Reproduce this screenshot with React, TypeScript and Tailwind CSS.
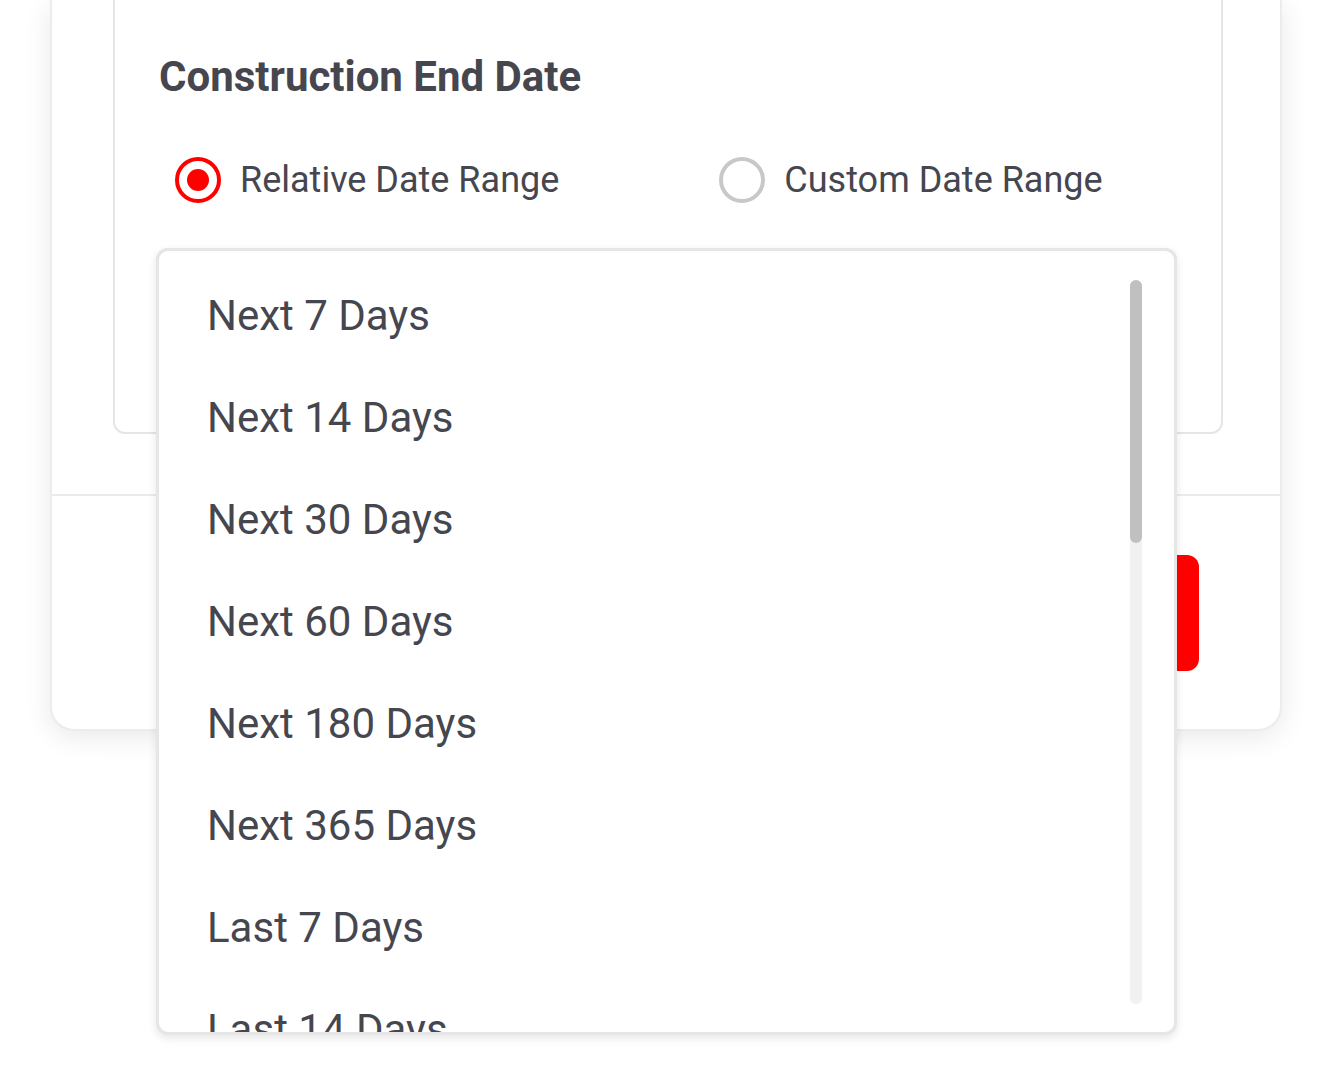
import React from "react";

const options = [
  "Next 7 Days",
  "Next 14 Days",
  "Next 30 Days",
  "Next 60 Days",
  "Next 180 Days",
  "Next 365 Days",
  "Last 7 Days",
  "Last 14 Days",
  "Last 30 Days",
];

function Radio({ checked, label }: { checked?: boolean; label: string }) {
  return (
    <label className="flex items-center gap-[19px]">
      <span
        className={
          checked
            ? "flex size-[46px] items-center justify-center rounded-full border-[4px] border-[#ff0000]"
            : "flex size-[46px] items-center justify-center rounded-full border-[4px] border-[#c8c8c8]"
        }
      >
        {checked && <span className="size-[22px] rounded-full bg-[#ff0000]" />}
      </span>
      <span className="text-[36px] leading-none text-[#46464f]">{label}</span>
    </label>
  );
}

export default function App() {
  return (
    <div className="min-h-screen bg-white font-['Roboto','Liberation_Sans',sans-serif]">
      <div className="ml-[50px] w-[1232px] rounded-b-[24px] border-x-2 border-b-2 border-[#ececec] bg-white shadow-[0_6px_28px_rgba(0,0,0,0.09)]">
        <div className="pb-[60px] pl-[61px] pr-[57px]">
          <div className="rounded-b-[12px] border-x-2 border-b-2 border-[#e5e5e5] pb-[60px] pl-[41px] pr-[44px] pt-[56px]">
            <h2 className="pl-[3px] text-[42px] font-bold leading-[42px] text-[#46464f]">Construction End Date</h2>
            <div className="mt-[59px] flex items-center gap-[160px] pl-[19px]">
              <Radio checked label="Relative Date Range" />
              <Radio label="Custom Date Range" />
            </div>
            <div className="relative mt-[45px] h-[124px]">
              <div className="h-full rounded-[12px] border-[3px] border-[#e6e6e6]" />
              <div className="absolute left-0 top-0 z-10 h-[787px] w-[1021px] overflow-hidden rounded-[12px] border-[3px] border-[#e6e6e6] bg-white shadow-[0_3px_8px_rgba(0,0,0,0.1)]">
                <ul className="pt-[14px]">
                  {options.map((o) => (
                    <li key={o} className="flex h-[102px] items-center pl-[48px] text-[42px] leading-none text-[#46464f]">
                      {o}
                    </li>
                  ))}
                </ul>
                <div className="absolute right-[32px] top-[29px] bottom-[28px] w-[12px] rounded-full bg-[#f1f1f1]">
                  <div className="h-[263px] w-full rounded-full bg-[#c0c0c0]" />
                </div>
              </div>
            </div>
          </div>
        </div>
        <div className="flex justify-end border-t-2 border-[#ebebeb] pb-[58px] pr-[81px] pt-[59px]">
          <button className="h-[116px] w-[260px] rounded-[12px] bg-[#ff0000] text-[36px] font-medium text-white">
            Apply
          </button>
        </div>
      </div>
    </div>
  );
}
